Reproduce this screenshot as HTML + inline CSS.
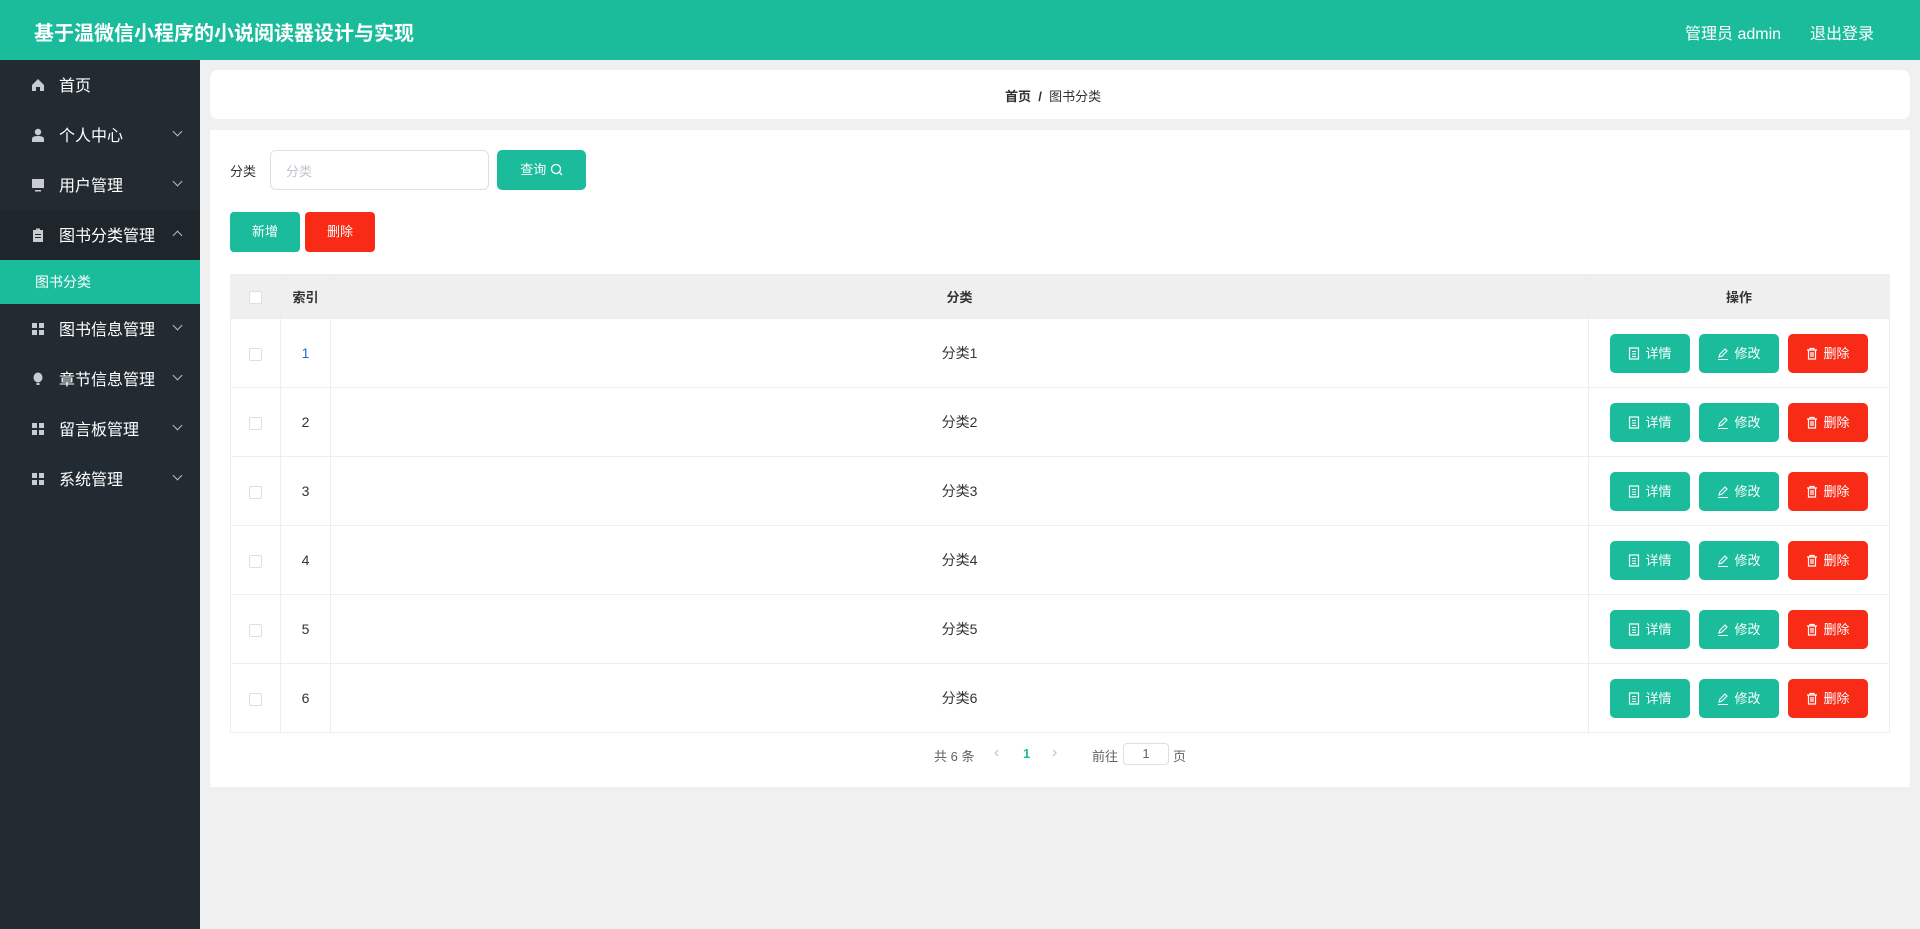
<!DOCTYPE html>
<html><head><meta charset="utf-8"><style>
*{box-sizing:border-box;margin:0;padding:0}
body{width:1920px;height:929px;overflow:hidden;background:#f0f0f0;font-family:"Liberation Sans","Noto Sans CJK SC",sans-serif;position:relative;color:#333}
.hd{position:absolute;left:0;top:0;width:1920px;height:60px;background:#1abc9c;color:#fff}
.hd .t{position:absolute;left:34px;top:17px;font-size:20px;font-weight:bold}
.hd .r{position:absolute;top:20px;font-size:16px}
.sb{position:absolute;left:0;top:60px;width:200px;height:869px;background:#222b32}
.mi{position:absolute;left:0;width:200px;height:50px;color:#fff;font-size:16px}
.mi .ic{position:absolute;left:31px;top:18px;width:14px;height:14px}
.mi .tx{position:absolute;left:59px;top:12px}
.mi .ar{position:absolute;left:174px;top:18px;width:7px;height:7px;border-right:1.5px solid #bbb;border-bottom:1.5px solid #bbb;transform:rotate(45deg)}
.mi .ar.up{transform:rotate(-135deg);top:22px}
.sub{position:absolute;left:0;top:260px;width:200px;height:44px;background:#1abc9c;color:#fff;font-size:14px}
.card{position:absolute;background:#fff}
.btn{position:absolute;color:#fff;border-radius:4px;font-size:13px;text-align:center}
.g{background:#1abc9c}.rd{background:#f72b16}
table{position:absolute;left:230px;top:274px;width:1660px;border-collapse:collapse;font-size:14px;color:#333}
td,th{border:1px solid #ebeef5;text-align:center;height:69px}
th{height:44px;background:#efeff0;font-weight:bold;font-size:13px}
.cb{display:inline-block;width:13px;height:13px;border:1px solid #dcdfe6;border-radius:2px;background:#fff;vertical-align:middle}
.ob{display:inline-block;width:80px;height:39px;line-height:39px;border-radius:5px;color:#fff;font-size:13px;margin:0 4.5px;vertical-align:middle}
.ob svg{vertical-align:-2px;margin-right:5px}
</style></head><body>
<div class="hd"><div class="t">基于温微信小程序的小说阅读器设计与实现</div>
<div class="r" style="left:1685px">管理员 admin</div><div class="r" style="left:1810px">退出登录</div></div>
<div class="sb">
<div class="mi" style="top:0"><svg class="ic" viewBox="0 0 14 14"><path d="M1 7L7 1l6 6v6H9V9H5v4H1z" fill="#c8ccd0"/></svg><span class="tx">首页</span></div>
<div class="mi" style="top:50px"><svg class="ic" viewBox="0 0 14 14"><circle cx="7" cy="4" r="3.2" fill="#c8ccd0"/><path d="M1 14v-3c0-2 2-3 6-3s6 1 6 3v3z" fill="#c8ccd0"/></svg><span class="tx">个人中心</span><i class="ar"></i></div>
<div class="mi" style="top:100px"><svg class="ic" viewBox="0 0 14 14"><rect x="1" y="1" width="12" height="9" fill="#c8ccd0"/><rect x="4" y="12" width="6" height="1.5" fill="#c8ccd0"/></svg><span class="tx">用户管理</span><i class="ar"></i></div>
<div class="mi" style="top:150px;background:#1e252b"><svg class="ic" viewBox="0 0 14 14"><path d="M2 2h3V0.5h4V2h3v12H2z M4 6h6v1H4z M4 9h6v1H4z" fill="#c8ccd0" fill-rule="evenodd"/></svg><span class="tx">图书分类管理</span><i class="ar up"></i></div>
<div class="sub" style="top:200px"><span style="position:absolute;left:35px;top:12px">图书分类</span></div>
<div class="mi" style="top:244px"><svg class="ic" viewBox="0 0 14 14" fill="#c8ccd0"><rect x="1" y="1" width="5" height="5"/><rect x="8" y="1" width="5" height="5"/><rect x="1" y="8" width="5" height="5"/><rect x="8" y="8" width="5" height="5"/></svg><span class="tx">图书信息管理</span><i class="ar"></i></div>
<div class="mi" style="top:294px"><svg class="ic" viewBox="0 0 14 14"><ellipse cx="7" cy="5.5" rx="4.5" ry="5" fill="#c8ccd0"/><rect x="5.5" y="11" width="3" height="2" fill="#c8ccd0"/></svg><span class="tx">章节信息管理</span><i class="ar"></i></div>
<div class="mi" style="top:344px"><svg class="ic" viewBox="0 0 14 14" fill="#c8ccd0"><rect x="1" y="1" width="5" height="5"/><rect x="8" y="1" width="5" height="5"/><rect x="1" y="8" width="5" height="5"/><rect x="8" y="8" width="5" height="5"/></svg><span class="tx">留言板管理</span><i class="ar"></i></div>
<div class="mi" style="top:394px"><svg class="ic" viewBox="0 0 14 14" fill="#c8ccd0"><rect x="1" y="1" width="5" height="5"/><rect x="8" y="1" width="5" height="5"/><rect x="1" y="8" width="5" height="5"/><rect x="8" y="8" width="5" height="5"/></svg><span class="tx">系统管理</span><i class="ar"></i></div>
</div>
<div class="card" style="left:210px;top:70px;width:1700px;height:49px;border-radius:8px"><div style="position:absolute;left:795px;top:16px;font-size:13px;font-weight:bold;color:#303133">首页 &nbsp;/&nbsp; <span style="font-weight:normal">图书分类</span></div></div>
<div class="card" style="left:210px;top:130px;width:1700px;height:657px"></div>
<div style="position:absolute;left:230px;top:161px;font-size:13px">分类</div>
<div style="position:absolute;left:270px;top:150px;width:219px;height:40px;border:1px solid #dcdfe6;border-radius:6px;background:#fff;font-size:13px;color:#c0c4cc;padding:10px 15px">分类</div>
<div class="btn g" style="left:497px;top:150px;width:89px;height:40px;line-height:40px;border-radius:5px">查询 <svg width="13" height="13" viewBox="0 0 13 13" style="vertical-align:-2px"><circle cx="6" cy="6" r="4.5" fill="none" stroke="#fff" stroke-width="1.3"/><path d="M9.3 9.3L12 12" stroke="#fff" stroke-width="1.3"/></svg></div>
<div class="btn g" style="left:230px;top:212px;width:70px;height:40px;line-height:40px">新增</div>
<div class="btn rd" style="left:305px;top:212px;width:70px;height:40px;line-height:40px">删除</div>
<table>
<tr><th style="width:50px"><span class="cb"></span></th><th style="width:50px">索引</th><th>分类</th><th style="width:301px">操作</th></tr>
<tr><td><span class="cb"></span></td><td style="color:#1f6fd1">1</td><td>分类1</td><td class="ops"></td></tr>
<tr><td><span class="cb"></span></td><td>2</td><td>分类2</td><td class="ops"></td></tr>
<tr><td><span class="cb"></span></td><td>3</td><td>分类3</td><td class="ops"></td></tr>
<tr><td><span class="cb"></span></td><td>4</td><td>分类4</td><td class="ops"></td></tr>
<tr><td><span class="cb"></span></td><td>5</td><td>分类5</td><td class="ops"></td></tr>
<tr><td><span class="cb"></span></td><td>6</td><td>分类6</td><td class="ops"></td></tr>
</table>
<div style="position:absolute;left:934px;top:746px;font-size:13px;color:#606266;width:260px;height:22px">
<span style="position:absolute;left:0;top:0">共 6 条</span>
<span style="position:absolute;left:60px;top:-2px;color:#c0c4cc;font-size:16px">‹</span>
<span style="position:absolute;left:89px;top:0;color:#1abc9c;font-weight:bold">1</span>
<span style="position:absolute;left:118px;top:-2px;color:#c0c4cc;font-size:16px">›</span>
<span style="position:absolute;left:158px;top:0">前往</span>
<span style="position:absolute;left:189px;top:-3px;width:46px;height:22px;border:1px solid #dcdfe6;border-radius:4px;text-align:center;line-height:20px">1</span>
<span style="position:absolute;left:239px;top:0">页</span>
</div>
<script>
var h='<span class="ob g"><svg width="12" height="13" viewBox="0 0 12 13"><rect x="1.5" y="1" width="9" height="11" fill="none" stroke="#fff" stroke-width="1.2"/><path d="M4 4.5h4M4 7h4M4 9.5h4" stroke="#fff"/></svg>详情</span><span class="ob g"><svg width="12" height="13" viewBox="0 0 12 13"><path d="M2 10l1-3 5-5 2 2-5 5z M1 12.5h10" fill="none" stroke="#fff" stroke-width="1.1"/></svg>修改</span><span class="ob rd"><svg width="12" height="13" viewBox="0 0 12 13"><path d="M1 3h10M4 3V1.5h4V3M2.5 3v9h7V3M5 5v5M7 5v5" fill="none" stroke="#fff" stroke-width="1.2"/></svg>删除</span>';
document.querySelectorAll('.ops').forEach(function(e){e.innerHTML=h});
</script>
</body></html>
